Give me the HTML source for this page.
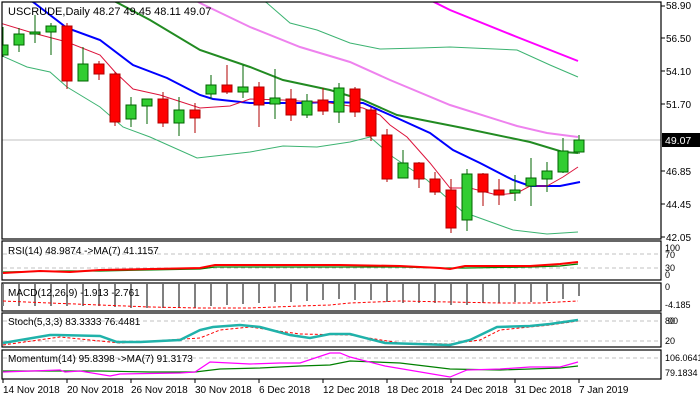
<!DOCTYPE html>
<html><head><meta charset="utf-8"><style>
html,body{margin:0;padding:0;background:#fff;}
svg{display:block;font-family:"Liberation Sans",sans-serif;}
</style></head><body>
<svg width="700" height="400" viewBox="0 0 700 400" xmlns="http://www.w3.org/2000/svg">
<rect width="700" height="400" fill="#fff"/>
<defs><clipPath id="mc"><rect x="2" y="2" width="659" height="237"/></clipPath></defs>
<g clip-path="url(#mc)">
<line x1="2" y1="140" x2="661" y2="140" stroke="#c0c0c0" stroke-width="1"/>
<polyline fill="none" stroke="#3cb371" stroke-width="1" points="262,0 267,3 290,23 317,30 350,43 380,49 420,48 450,47 517,50 550,65 578,77"/>
<polyline fill="none" stroke="#3cb371" stroke-width="1" points="0,55 27,67 50,72 67,87 100,107 123,127 150,137 197,158 250,152 283,146 317,147 350,142 370,137 393,157 427,180 447,198 463,212 513,230 547,234 578,232"/>
<polyline fill="none" stroke="#ee82ee" stroke-width="2" points="195,0 200,3 250,27 300,47 350,62 390,80 450,105 517,126 547,133 578,137"/>
<polyline fill="none" stroke="#ff00ff" stroke-width="2" points="430,0 450,10 517,37 578,61"/>
<polyline fill="none" stroke="#228b22" stroke-width="2" points="112,0 118,3 150,20 200,50 250,67 283,80 330,90 363,100 397,115 463,128 530,142 563,152 578,153"/>
<polyline fill="none" stroke="#0000ff" stroke-width="2" points="28,0 33,2 67,28 100,40 133,65 167,78 200,95 213,99 250,103 300,103 330,102 363,103 397,118 430,133 453,150 480,163 513,180 530,186 560,186 580,182"/>
<polyline fill="none" stroke="#dc143c" stroke-width="1" points="0,23 33,33 67,42 100,55 115,72 133,89 160,95 200,108 230,106 250,99 283,100 330,103 363,108 380,115 390,125 407,137 430,163 450,188 470,188 497,195 517,193 530,186 547,186 563,177 578,167"/>
<g stroke-width="1">
<g stroke="#006400" fill="#32cd32">
<line x1="3" y1="27" x2="3" y2="57"/><rect x="-2" y="45" width="10" height="10"/>
<line x1="19" y1="28" x2="19" y2="52"/><rect x="14" y="34" width="10" height="11"/>
<line x1="35" y1="15" x2="35" y2="43"/><rect x="30" y="32" width="10" height="2"/>
<line x1="51" y1="23" x2="51" y2="55"/><rect x="46" y="26" width="10" height="6"/>
<line x1="83" y1="47" x2="83" y2="81"/><rect x="78" y="64" width="10" height="17"/>
<line x1="131" y1="97" x2="131" y2="127"/><rect x="126" y="105" width="10" height="14"/>
<line x1="147" y1="99" x2="147" y2="124"/><rect x="142" y="99" width="10" height="7"/>
<line x1="179" y1="97" x2="179" y2="136"/><rect x="174" y="110" width="10" height="13"/>
<line x1="211" y1="75" x2="211" y2="99"/><rect x="206" y="85" width="10" height="9"/>
<line x1="243" y1="65" x2="243" y2="98"/><rect x="238" y="87" width="10" height="5"/>
<line x1="275" y1="69" x2="275" y2="119"/><rect x="270" y="98" width="10" height="6"/>
<line x1="307" y1="94" x2="307" y2="118"/><rect x="302" y="101" width="10" height="14"/>
<line x1="339" y1="83" x2="339" y2="123"/><rect x="334" y="88" width="10" height="24"/>
<line x1="403" y1="150" x2="403" y2="178"/><rect x="398" y="163" width="10" height="15"/>
<line x1="467" y1="169" x2="467" y2="231"/><rect x="462" y="174" width="10" height="46"/>
<line x1="515" y1="175" x2="515" y2="201"/><rect x="510" y="190" width="10" height="3"/>
<line x1="531" y1="158" x2="531" y2="206"/><rect x="526" y="178" width="10" height="8"/>
<line x1="547" y1="162" x2="547" y2="192"/><rect x="542" y="171" width="10" height="8"/>
<line x1="563" y1="138" x2="563" y2="173"/><rect x="558" y="151" width="10" height="21"/>
<line x1="579" y1="135" x2="579" y2="154"/><rect x="574" y="140" width="10" height="12"/>
</g>
<g stroke="#b00000" fill="#ff0000">
<line x1="67" y1="23" x2="67" y2="89"/><rect x="62" y="26" width="10" height="55"/>
<line x1="99" y1="61" x2="99" y2="80"/><rect x="94" y="64" width="10" height="10"/>
<line x1="115" y1="72" x2="115" y2="126"/><rect x="110" y="74" width="10" height="48"/>
<line x1="163" y1="92" x2="163" y2="127"/><rect x="158" y="99" width="10" height="24"/>
<line x1="195" y1="103" x2="195" y2="133"/><rect x="190" y="110" width="10" height="8"/>
<line x1="227" y1="65" x2="227" y2="94"/><rect x="222" y="85" width="10" height="7"/>
<line x1="259" y1="82" x2="259" y2="127"/><rect x="254" y="87" width="10" height="18"/>
<line x1="291" y1="89" x2="291" y2="121"/><rect x="286" y="99" width="10" height="16"/>
<line x1="323" y1="88" x2="323" y2="115"/><rect x="318" y="100" width="10" height="11"/>
<line x1="355" y1="87" x2="355" y2="117"/><rect x="350" y="89" width="10" height="23"/>
<line x1="371" y1="107" x2="371" y2="141"/><rect x="366" y="110" width="10" height="26"/>
<line x1="387" y1="129" x2="387" y2="182"/><rect x="382" y="135" width="10" height="44"/>
<line x1="419" y1="162" x2="419" y2="188"/><rect x="414" y="163" width="10" height="16"/>
<line x1="435" y1="172" x2="435" y2="195"/><rect x="430" y="179" width="10" height="13"/>
<line x1="451" y1="179" x2="451" y2="233"/><rect x="446" y="190" width="10" height="38"/>
<line x1="483" y1="173" x2="483" y2="206"/><rect x="478" y="174" width="10" height="18"/>
<line x1="499" y1="179" x2="499" y2="205"/><rect x="494" y="190" width="10" height="5"/>
</g>
</g>
</g>
<text x="8" y="15" font-size="11" fill="#000">USCRUDE,Daily  48.27 49.45 48.11 49.07</text>
<g fill="none" stroke="#000" stroke-width="1.2">
<rect x="2" y="2" width="659" height="237"/>
<rect x="2" y="241" width="659" height="39"/>
<rect x="2" y="283" width="659" height="28"/>
<rect x="2" y="313" width="659" height="34"/>
<rect x="2" y="350" width="659" height="29"/>
</g>
<g font-size="10" fill="#000">
<text x="666" y="9">58.90</text>
<text x="666" y="42">56.50</text>
<text x="666" y="75">54.10</text>
<text x="666" y="108">51.70</text>
<text x="666" y="175">46.85</text>
<text x="666" y="208">44.45</text>
<text x="666" y="241">42.05</text>
</g>
<g stroke="#000"><line x1="661" y1="6" x2="665" y2="6"/><line x1="661" y1="38" x2="665" y2="38"/><line x1="661" y1="71" x2="665" y2="71"/><line x1="661" y1="104" x2="665" y2="104"/><line x1="661" y1="171" x2="665" y2="171"/><line x1="661" y1="204" x2="665" y2="204"/><line x1="661" y1="237" x2="665" y2="237"/></g>
<rect x="662" y="133" width="38" height="14" fill="#000"/>
<text x="665" y="144" font-size="10.5" fill="#fff">49.07</text>
<g stroke="#c0c0c0" stroke-dasharray="4,3"><line x1="3" y1="254" x2="660" y2="254"/><line x1="3" y1="268" x2="660" y2="268"/>
<line x1="3" y1="321" x2="660" y2="321"/><line x1="3" y1="341" x2="660" y2="341"/><line x1="3" y1="358" x2="660" y2="358"/></g>
<polyline fill="none" stroke="#008000" stroke-width="1.2" points="3,272 60,271 100,271 200,269 215,267 340,267 400,267 440,268 465,268 530,267 560,266 578,264"/>
<polyline fill="none" stroke="#ff0000" stroke-width="2" points="3,273 40,271 70,272 100,270 200,268 215,265 340,265 400,266 440,268 450,269 465,266 530,266 560,264 578,262"/>
<text x="8" y="254" font-size="10" fill="#000">RSI(14) 48.9874  -&gt;MA(7) 41.1157</text>
<g font-size="9" fill="#000"><text x="665" y="251">100</text><text x="665" y="258">70</text><text x="665" y="271">30</text><text x="665" y="278">0</text></g>
<g stroke="#808080" stroke-width="2">
<line x1="3" y1="284" x2="3" y2="306"/><line x1="19" y1="284" x2="19" y2="306"/><line x1="35" y1="284" x2="35" y2="306"/><line x1="51" y1="284" x2="51" y2="306"/><line x1="67" y1="284" x2="67" y2="306"/><line x1="83" y1="284" x2="83" y2="306"/><line x1="99" y1="284" x2="99" y2="306"/><line x1="115" y1="284" x2="115" y2="307"/><line x1="131" y1="284" x2="131" y2="308"/><line x1="147" y1="284" x2="147" y2="308"/><line x1="163" y1="284" x2="163" y2="308"/><line x1="179" y1="284" x2="179" y2="308"/><line x1="195" y1="284" x2="195" y2="308"/><line x1="211" y1="284" x2="211" y2="306"/><line x1="227" y1="284" x2="227" y2="305"/><line x1="243" y1="284" x2="243" y2="304"/><line x1="259" y1="284" x2="259" y2="303"/><line x1="275" y1="284" x2="275" y2="302"/><line x1="291" y1="284" x2="291" y2="302"/><line x1="307" y1="284" x2="307" y2="301"/><line x1="323" y1="284" x2="323" y2="300"/><line x1="339" y1="284" x2="339" y2="299"/><line x1="355" y1="284" x2="355" y2="300"/><line x1="371" y1="284" x2="371" y2="300"/><line x1="387" y1="284" x2="387" y2="302"/><line x1="403" y1="284" x2="403" y2="303"/><line x1="419" y1="284" x2="419" y2="303"/><line x1="435" y1="284" x2="435" y2="303"/><line x1="451" y1="284" x2="451" y2="305"/><line x1="467" y1="284" x2="467" y2="305"/><line x1="483" y1="284" x2="483" y2="303"/><line x1="499" y1="284" x2="499" y2="303"/><line x1="515" y1="284" x2="515" y2="302"/><line x1="531" y1="284" x2="531" y2="302"/><line x1="547" y1="284" x2="547" y2="301"/><line x1="563" y1="284" x2="563" y2="299"/><line x1="579" y1="284" x2="579" y2="296"/>
</g>
<polyline fill="none" stroke="#ff0000" stroke-width="1" stroke-dasharray="3,2" points="3,301 50,303 100,305 150,307 200,308 250,308 300,306 330,305 350,303 400,301 450,302 500,303 540,303 578,301"/>
<text x="8" y="296" font-size="10" fill="#000">MACD(12,26,9) -1.913 -2.761</text>
<g font-size="9" fill="#000"><text x="665" y="290">0</text><text x="665" y="308">-4.185</text></g>
<polyline fill="none" stroke="#ff0000" stroke-width="1" stroke-dasharray="3,2" points="3,345 60,337 120,343 200,338 220,330 250,327 300,334 350,335 400,343 450,344 480,340 500,330 550,325 578,321"/>
<polyline fill="none" stroke="#20b2aa" stroke-width="2.5" points="3,343 50,335 57,335 100,336 117,342 140,342 180,340 200,330 213,327 240,325 260,327 290,335 310,338 330,334 350,334 385,343 450,345 470,340 497,327 530,326 550,324 578,320"/>
<text x="8" y="325" font-size="10" fill="#000">Stoch(5,3,3) 83.3333 76.4481</text>
<g font-size="9" fill="#000"><text x="665" y="324">80</text><text x="668" y="324">00</text><text x="665" y="344">20</text></g>
<polyline fill="none" stroke="#008000" stroke-width="1.2" points="3,371 100,371 150,372 195,372 220,369 260,368 300,366 330,365 350,361 400,363 450,369 500,370 560,368 578,366"/>
<polyline fill="none" stroke="#ff00ff" stroke-width="1.2" points="3,372 60,370 65,372 80,371 110,376 120,374 180,373 195,372 210,362 250,364 280,363 300,363 330,353 340,353 350,357 385,366 450,377 467,370 500,369 530,367 560,367 578,362"/>
<text x="8" y="362" font-size="10" fill="#000">Momentum(14) 95.8398  -&gt;MA(7) 91.3173</text>
<g font-size="9" fill="#000"><text x="665" y="361">106.0641</text><text x="665" y="376">79.1834</text></g>
<g stroke="#000"><line x1="3" y1="379" x2="3" y2="383"/><line x1="67" y1="379" x2="67" y2="383"/><line x1="131" y1="379" x2="131" y2="383"/><line x1="195" y1="379" x2="195" y2="383"/><line x1="259" y1="379" x2="259" y2="383"/><line x1="323" y1="379" x2="323" y2="383"/><line x1="387" y1="379" x2="387" y2="383"/><line x1="451" y1="379" x2="451" y2="383"/><line x1="515" y1="379" x2="515" y2="383"/><line x1="579" y1="379" x2="579" y2="383"/></g>
<g font-size="10" fill="#000">
<text x="3" y="393">14 Nov 2018</text><text x="67" y="393">20 Nov 2018</text><text x="131" y="393">26 Nov 2018</text><text x="195" y="393">30 Nov 2018</text><text x="259" y="393">6 Dec 2018</text><text x="323" y="393">12 Dec 2018</text><text x="387" y="393">18 Dec 2018</text><text x="451" y="393">24 Dec 2018</text><text x="515" y="393">31 Dec 2018</text><text x="579" y="393">7 Jan 2019</text>
</g>
</svg>
</body></html>
